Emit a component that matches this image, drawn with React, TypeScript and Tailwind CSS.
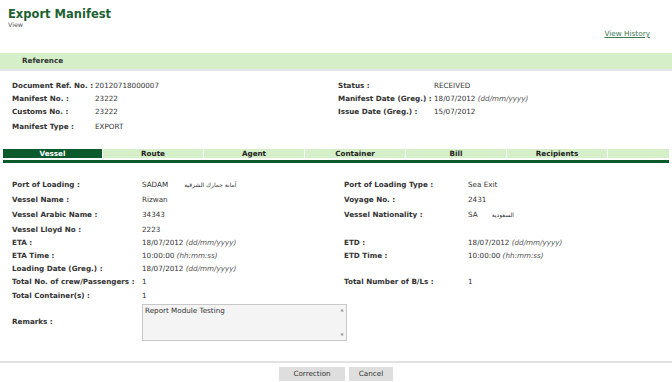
import React from "react";

const F = { fontFamily: '"DejaVu Sans", Verdana, sans-serif' };

function Row({ h, children }: { h: number; children: React.ReactNode }) {
  return (
    <div className="flex items-center" style={{ height: h }}>
      {children}
    </div>
  );
}

function Pair({ label, value, lw, vw }: { label: string; value?: React.ReactNode; lw: number; vw: number }) {
  return (
    <div className="flex items-center" style={{ width: lw + vw }}>
      <div className="font-bold text-[#333] whitespace-nowrap" style={{ width: lw }}>{label}</div>
      <div className="text-[#333] whitespace-nowrap">{value}</div>
    </div>
  );
}

const It = ({ t }: { t: string }) => <i className="text-[#555]">{t}</i>;

export default function App() {
  const tabs = ["Vessel", "Route", "Agent", "Container", "Bill", "Recipients"];
  const vrows: [number, string, React.ReactNode, string, React.ReactNode][] = [
    [15, "Port of Loading :", <span>SADAM<span className="ml-[16px] text-[6px]">أمانة جمارك الشرقية</span></span>, "Port of Loading Type :", "Sea Exit"],
    [15, "Vessel Name :", "Rizwan", "Voyage No. :", "2431"],
    [15, "Vessel Arabic Name :", "34343", "Vessel Nationality :", <span>SA<span className="ml-[14px] text-[6px]">السعودية</span></span>],
    [14, "Vessel Lloyd No :", "2223", "", ""],
    [13, "ETA :", <span>18/07/2012 <It t="(dd/mm/yyyy)" /></span>, "ETD :", <span>18/07/2012 <It t="(dd/mm/yyyy)" /></span>],
    [12, "ETA Time :", <span>10:00:00 <It t="(hh:mm:ss)" /></span>, "ETD Time :", <span>10:00:00 <It t="(hh:mm:ss)" /></span>],
    [14, "Loading Date (Greg.) :", <span>18/07/2012 <It t="(dd/mm/yyyy)" /></span>, "", ""],
    [13, "Total No. of crew/Passengers :", "1", "Total Number of B/Ls :", "1"],
    [14, "Total Container(s) :", "1", "", ""],
  ];
  return (
    <div className="w-[672px] h-[382px] bg-white overflow-hidden text-[7.2px] leading-none" style={F}>
      {/* header */}
      <div className="pl-[8px] pt-[7px] relative h-[53px]">
        <div className="text-[11.5px] font-bold text-[#1d6132] leading-[14px]">Export Manifest</div>
        <div className="text-[6.3px] text-[#555] mt-[1px]">View</div>
        <div className="absolute right-[22px] top-[30px] text-[7.3px] text-[#3f7a55] underline">View History</div>
      </div>
      {/* reference band */}
      <div className="h-[16px] bg-[#d5efc9] flex items-center pl-[22px] font-bold text-[#333]">Reference</div>
      <div className="h-[2px] bg-[#e6e6e6]" />
      <div className="pt-[8.5px] pl-[12px]">
        <div className="flex">
          <div className="w-[326px]">
            <Row h={13}><Pair label="Document Ref. No. :" value="20120718000007" lw={83} vw={200} /></Row>
            <Row h={13}><Pair label="Manifest No. :" value="23222" lw={83} vw={200} /></Row>
            <Row h={13}><Pair label="Customs No. :" value="23222" lw={83} vw={200} /></Row>
            <Row h={17}><Pair label="Manifest Type :" value="EXPORT" lw={83} vw={200} /></Row>
          </div>
          <div>
            <Row h={13}><Pair label="Status :" value="RECEIVED" lw={96} vw={200} /></Row>
            <Row h={13}><Pair label="Manifest Date (Greg.) :" value={<span>18/07/2012 <It t="(dd/mm/yyyy)" /></span>} lw={96} vw={200} /></Row>
            <Row h={13}><Pair label="Issue Date (Greg.) :" value="15/07/2012" lw={96} vw={200} /></Row>
          </div>
        </div>
      </div>
      {/* tabs */}
      <div className="mt-[13.5px] mx-[3px] w-[666px]">
        <div className="flex gap-px h-[9px]">
          {tabs.map((t, i) => (
            <div
              key={t}
              className={
                i === 0
                  ? "w-[99px] bg-[#0c5a2c] text-white font-bold flex items-center justify-center"
                  : "w-[100px] bg-[#d5efc9] text-[#222] font-bold flex items-center justify-center"
              }
            >
              {t}
            </div>
          ))}
          <div className="flex-1 bg-[#d5efc9]" />
        </div>
        <div className="h-[2px]" />
        <div className="h-[3px] bg-[#0c5a2c]" />
      </div>
      {/* vessel */}
      <div className="pt-[14.5px] pl-[12px]">
        {vrows.map(([h, l1, v1, l2, v2], i) => (
          <Row key={i} h={h}>
            <Pair label={l1} value={v1} lw={130} vw={202} />
            {l2 ? <Pair label={l2} value={v2} lw={124} vw={200} /> : null}
          </Row>
        ))}
        <div className="flex items-center mt-[1px]">
          <div className="w-[130px] font-bold text-[#333]">Remarks :</div>
          <div className="w-[205px] h-[37px] bg-[#f4f4f4] border border-[#c8c8c8] flex justify-between">
            <div className="pl-[2px] pt-[2px] text-[#333]">Report Module Testing</div>
            <div className="w-[8px] flex flex-col justify-between items-center py-[3px] text-[4px] text-[#999]">
              <span>▲</span>
              <span>▼</span>
            </div>
          </div>
        </div>
      </div>
      <div className="mt-[20px] h-[2px] bg-[#e2e2e2]" />
      <div className="flex justify-center gap-[4px] mt-[4px]">
        <div className="w-[66px] h-[14px] bg-[#dedede] flex items-center justify-center text-[#333]">Correction</div>
        <div className="w-[44px] h-[14px] bg-[#dedede] flex items-center justify-center text-[#333]">Cancel</div>
      </div>
    </div>
  );
}
